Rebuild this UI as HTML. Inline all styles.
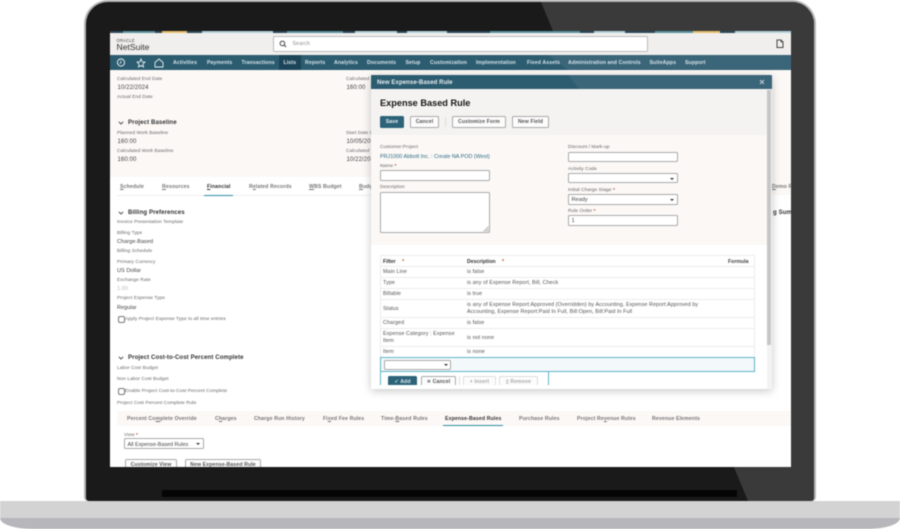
<!DOCTYPE html>
<html><head><meta charset="utf-8">
<style>
*{box-sizing:border-box}
html,body{margin:0;padding:0;background:#fff}
html{overflow:hidden}
body{width:900px;height:529px;overflow:hidden;position:relative;font-family:"Liberation Sans",sans-serif;color:#333;filter:blur(.4px)}
.a,.t,.l,.v,.h,.n,.tb,.b,.box{position:absolute;white-space:nowrap}
.l{font-size:4.8px;color:#666;line-height:6px;letter-spacing:.07px;margin-top:1px}
.v{font-size:5.6px;color:#444;line-height:8px;margin-top:1px}
.v.num{font-size:6px;letter-spacing:.1px}
.h{font-size:6.05px;font-weight:bold;color:#333;line-height:8px;letter-spacing:.1px;margin-top:1px}
.n{font-size:5.2px;font-weight:bold;color:#d5e2e8;line-height:8px;top:59px;letter-spacing:.1px}
.tb{font-size:5.2px;font-weight:bold;color:#777;line-height:8px;letter-spacing:.12px;margin-top:1px}
.b{font-size:5.2px;font-weight:bold;color:#555;background:#fcfcfc;border:1px solid #aaa;border-radius:1.5px;text-align:center;line-height:11px;height:12px;letter-spacing:.1px}
.box{background:#fff;border:1px solid #aaa;border-radius:1.5px}
.arr{position:absolute;width:0;height:0;border-left:2px solid transparent;border-right:2px solid transparent;border-top:2px solid #333}
.rq{color:#c74634;font-weight:bold}
.row{position:absolute;left:380px;width:375px;border-top:1px solid #ececec}
.d{font-size:5.4px;color:#555;line-height:7.2px;letter-spacing:.07px;margin-top:.5px}
</style></head><body>

<!-- base -->
<div class="a" style="left:0;top:501px;width:900px;height:28px;background:#d3d3d3;overflow:hidden;border-radius:0 0 32px 32px / 0 0 11px 11px">
  <div class="a" style="left:0;top:17px;width:900px;height:11px;background:#b7b6bb;border-radius:0 0 32px 32px / 0 0 11px 11px"></div>
</div>

<!-- laptop lid -->
<div class="a" style="left:84px;top:0;width:732px;height:501px;background:#b5b5b5;border-radius:24px 24px 4px 4px;padding:2px 2px 0 2px">
  <div style="position:relative;width:100%;height:100%;background:#1a1a1a;border-radius:22px 22px 3px 3px;overflow:hidden">
    <svg class="a" style="left:0;top:0" width="728" height="499"><polygon points="455,0 728,0 728,499 662,499" fill="#3a3a3a"/></svg>
    <div class="a" style="left:76px;top:488px;width:575px;height:7px;background:#050505"></div>
  </div>
</div>

<!-- screen -->
<div class="a" style="left:110px;top:31px;width:681px;height:436px;background:#fff;overflow:hidden">
  <!-- top stripe -->
  <svg class="a" style="left:0;top:0" width="681" height="2"><rect width="681" height="2" fill="#2a4a58"/><rect x="13" width="32" height="2" fill="#5b93a3"/><rect x="52" width="25" height="2" fill="#e6bf6e"/><rect x="92" width="71" height="2" fill="#b2d2da"/><rect x="177" width="56" height="2" fill="#5b93a3"/><rect x="245" width="42" height="2" fill="#b2d2da"/><rect x="297" width="40" height="2" fill="#b2d2da"/><rect x="380" width="90" height="2" fill="#5b93a3"/><rect x="484" width="31" height="2" fill="#b2d2da"/><rect x="545" width="38" height="2" fill="#5b93a3"/><rect x="583" width="27" height="2" fill="#e6bf6e"/><rect x="625" width="56" height="2" fill="#b2d2da"/></svg>
  <!-- header -->
  <div class="a" style="left:0;top:2px;width:681px;height:22px;background:#f1efed"></div>
  <!-- nav -->
  <svg class="a" style="left:0;top:24px" width="681" height="15"><rect width="681" height="15" fill="#3b6579"/><polygon points="0,0 438,0 458,15 0,15" fill="#2c5c70"/><rect x="169" width="22" height="15" fill="#1c4458"/></svg>
  <!-- content bg -->
  <div class="a" style="left:0;top:39px;width:681px;height:107px;background:#fbf8f6"></div>
</div>

<!-- screen overlay elements, absolute coords -->
<div class="a" style="left:116.5px;top:37.5px;font-size:4.2px;color:#444;line-height:5px;letter-spacing:.2px">ORACLE</div>
<div class="a" style="left:116.5px;top:41.5px;font-size:8.6px;color:#333;line-height:10px">NetSuite</div>
<div class="box" style="left:273px;top:36px;width:375px;height:16px;border-color:#bbb"></div>
<svg class="a" style="left:279px;top:40px" width="8" height="8" viewBox="0 0 8 8"><circle cx="3.4" cy="3.4" r="2.3" fill="none" stroke="#444" stroke-width="1"/><path d="M5 5L7 7" stroke="#444" stroke-width="1.1"/></svg>
<div class="a" style="left:292.5px;top:40px;font-size:5.2px;color:#888;line-height:8px;letter-spacing:.2px">Search</div>
<svg class="a" style="left:776px;top:39px" width="8" height="10" viewBox="0 0 8 10"><path d="M1 1H5L7 3V8.500H1Z" fill="none" stroke="#444" stroke-width="1"/><path d="M5 1V3H7" fill="none" stroke="#444" stroke-width=".8"/></svg>

<!-- nav icons -->
<svg class="a" style="left:116px;top:57px" width="10" height="11" viewBox="0 0 10 11"><circle cx="5" cy="5.500" r="3.600" fill="none" stroke="#e6eef1" stroke-width="1"/><path d="M5 3.500V5.700L3.500 6.700" fill="none" stroke="#e6eef1" stroke-width=".8"/></svg>
<svg class="a" style="left:136px;top:58px" width="10" height="10" viewBox="0 0 10 10"><path d="M5 1L6.200 3.800L9 4.100L6.900 6L7.500 9L5 7.500L2.500 9L3.100 6L1 4.100L3.800 3.800Z" fill="none" stroke="#e6eef1" stroke-width=".9"/></svg>
<svg class="a" style="left:154px;top:58px" width="10" height="10" viewBox="0 0 10 10"><path d="M1 4.500L5 1L9 4.500V9H1Z" fill="none" stroke="#e6eef1" stroke-width=".9"/></svg>
<span class="n" style="left:173px">Activities</span>
<span class="n" style="left:207px">Payments</span>
<span class="n" style="left:241.500px">Transactions</span>
<span class="n" style="left:283.500px">Lists</span>
<span class="n" style="left:305px">Reports</span>
<span class="n" style="left:334px">Analytics</span>
<span class="n" style="left:367px">Documents</span>
<span class="n" style="left:405.500px">Setup</span>
<span class="n" style="left:430px">Customization</span>
<span class="n" style="left:476px">Implementation</span>
<span class="n" style="left:527px">Fixed Assets</span>
<span class="n" style="left:568px">Administration and Controls</span>
<span class="n" style="left:649.500px">SuiteApps</span>
<span class="n" style="left:685px">Support</span>

<!-- main content upper -->
<span class="l" style="left:117px;top:76px">Calculated End Date</span>
<span class="v num" style="left:117.500px;top:82.500px">10/22/2024</span>
<span class="l" style="left:117px;top:94px">Actual End Date</span>
<svg class="a" style="left:118px;top:121px" width="6" height="4"><path d="M.8 .8L3 3L5.200 .8" fill="none" stroke="#444" stroke-width=".9"/></svg>
<span class="h" style="left:128px;top:118px">Project Baseline</span>
<span class="l" style="left:117px;top:130px">Planned Work Baseline</span>
<span class="v num" style="left:117.500px;top:136.500px">160:00</span>
<span class="l" style="left:117px;top:148px">Calculated Work Baseline</span>
<span class="v num" style="left:117.500px;top:155px">160:00</span>
<span class="l" style="left:346px;top:76px">Calculated</span>
<span class="v num" style="left:346.500px;top:82.500px">160:00</span>
<span class="l" style="left:346px;top:130px">Start Date I</span>
<span class="v num" style="left:346.500px;top:136.500px">10/05/20</span>
<span class="l" style="left:346px;top:148px">Calculated</span>
<span class="v num" style="left:346.500px;top:155px">10/22/20</span>

<!-- tabs -->
<div class="a" style="left:117px;top:195px;width:254px;height:1px;background:#eee"></div>
<span class="tb" style="left:120px;top:182px"><u>S</u>chedule</span>
<span class="tb" style="left:162px;top:182px"><u>R</u>esources</span>
<span class="tb" style="left:207px;top:182px;color:#333"><u>F</u>inancial</span>
<div class="a" style="left:204px;top:194.500px;width:29px;height:1.500px;background:#2f8da3"></div>
<span class="tb" style="left:249px;top:182px">R<u>e</u>lated Records</span>
<span class="tb" style="left:309px;top:182px"><u>W</u>BS Budget</span>
<span class="tb" style="left:359px;top:182px"><u>B</u>udg</span>
<div class="a" style="left:772px;top:177px;width:19px;height:18px;background:#fbf8f6"></div>
<span class="tb" style="left:772px;top:182px;width:19px;overflow:hidden"><u>D</u>emo R</span>
<span class="h" style="left:773px;top:208px;width:18px;overflow:hidden">g Sum</span>

<!-- billing -->
<svg class="a" style="left:118px;top:211px" width="6" height="4"><path d="M.8 .8L3 3L5.200 .8" fill="none" stroke="#444" stroke-width=".9"/></svg>
<span class="h" style="left:128px;top:208px">Billing Preferences</span>
<span class="l" style="left:117px;top:219px">Invoice Presentation Template</span>
<span class="l" style="left:117px;top:230px">Billing Type</span>
<span class="v" style="left:117px;top:237px">Charge-Based</span>
<span class="l" style="left:117px;top:248px">Billing Schedule</span>
<span class="l" style="left:117px;top:259px">Primary Currency</span>
<span class="v" style="left:117px;top:266px">US Dollar</span>
<span class="l" style="left:117px;top:277px">Exchange Rate</span>
<span class="v" style="left:117px;top:284px;color:#bbb">1.00</span>
<span class="l" style="left:117px;top:295px">Project Expense Type</span>
<span class="v" style="left:117px;top:302.500px">Regular</span>
<div class="box" style="left:118px;top:316px;width:7px;height:7px;border-color:#777;border-radius:2px"></div>
<span class="l" style="left:125px;top:316px">Apply Project Expense Type to all time entries</span>

<svg class="a" style="left:118px;top:356px" width="6" height="4"><path d="M.8 .8L3 3L5.200 .8" fill="none" stroke="#444" stroke-width=".9"/></svg>
<span class="h" style="left:128px;top:353px">Project Cost-to-Cost Percent Complete</span>
<span class="l" style="left:117px;top:365px">Labor Cost Budget</span>
<span class="l" style="left:117px;top:376px">Non Labor Cost Budget</span>
<div class="box" style="left:118px;top:388px;width:7px;height:7px;border-color:#777;border-radius:2px"></div>
<span class="l" style="left:125px;top:388px">Enable Project Cost-to-Cost Percent Complete</span>
<span class="l" style="left:117px;top:400px">Project Cost Percent Complete Rule</span>

<!-- subtabs -->
<div class="a" style="left:117px;top:411px;width:674px;height:15px;background:#fbf8f6"></div>
<span class="tb" style="left:127px;top:414px">Percent Co<u>m</u>plete Override</span>
<span class="tb" style="left:215px;top:414px">C<u>h</u>arges</span>
<span class="tb" style="left:254px;top:414px">Charge Run History</span>
<span class="tb" style="left:323px;top:414px">Fi<u>x</u>ed Fee Rules</span>
<span class="tb" style="left:381px;top:414px">Time-<u>B</u>ased Rules</span>
<span class="tb" style="left:445px;top:414px;color:#333">Expense-Based Rules</span>
<div class="a" style="left:443px;top:424.500px;width:60px;height:1.500px;background:#2f8da3"></div>
<span class="tb" style="left:519px;top:414px">Purchase Rules</span>
<span class="tb" style="left:577px;top:414px">Project Re<u>v</u>enue Rules</span>
<span class="tb" style="left:652px;top:414px">Revenue Elements</span>

<span class="l" style="left:124px;top:432px">View <span class="rq">*</span></span>
<div class="box" style="left:124px;top:438px;width:80px;height:11px"></div>
<span class="v" style="left:127.500px;top:439.500px;font-size:5.400px">All Expense-Based Rules</span>
<div class="arr" style="left:196px;top:442.500px"></div>

<div class="a" style="left:110px;top:457px;width:681px;height:10px;overflow:hidden">
  <div class="b" style="left:15px;top:2px;width:52px;height:13px;border-radius:2px">Customize View</div>
  <div class="b" style="left:75px;top:2px;width:76px;height:13px;border-radius:2px">New Expense-Based Rule</div>
</div>

<!-- modal -->
<div class="a" style="left:371px;top:75px;width:401px;height:314px;background:#fff;box-shadow:0 2px 9px rgba(0,0,0,.22);border-radius:1px;overflow:hidden">
  <svg class="a" style="left:0;top:0" width="401" height="14"><rect width="401" height="14" fill="#3b6579"/><polygon points="0,0 197,0 208,14 0,14" fill="#2c5c70"/></svg>
  <div class="a" style="left:0;top:14px;width:396px;height:46px;background:#f4f3f1"></div>
  <div class="a" style="left:0;top:60px;width:396px;height:110px;background:#fbf8f6"></div>
  <div class="a" style="left:396px;top:14px;width:5px;height:300px;background:#f3f3f3"></div>
  <div class="a" style="left:396px;top:15px;width:4px;height:255px;background:#c6c6c6"></div>
</div>
<span class="a" style="left:377px;top:79px;font-size:6px;font-weight:bold;color:#e8eff2;line-height:8px;letter-spacing:.1px">New Expense-Based Rule</span>
<svg class="a" style="left:759px;top:79px" width="6" height="6"><path d="M1 1L5 5M5 1L1 5" stroke="#c8d6dc" stroke-width=".9"/></svg>
<span class="a" style="left:380px;top:96.500px;font-size:9.200px;font-weight:bold;color:#161513;line-height:12px">Expense Based Rule</span>

<div class="b" style="left:380px;top:116px;width:24px;background:#2c6379;border-color:#2c6379;color:#e8eff2">Save</div>
<div class="b" style="left:410px;top:116px;width:29px">Cancel</div>
<div class="a" style="left:445px;top:117px;width:1px;height:10px;background:#ddd"></div>
<div class="b" style="left:452px;top:116px;width:54px">Customize Form</div>
<div class="b" style="left:512px;top:116px;width:37px">New Field</div>

<span class="l" style="left:380px;top:144px">Customer:Project</span>
<span class="a" style="left:380px;top:152.500px;font-size:5.400px;color:#2c6a82;line-height:8px;letter-spacing:.02px">PRJ1000 Abbott Inc. : Create NA POD (West)</span>
<span class="l" style="left:380px;top:163px">Name <span class="rq">*</span></span>
<div class="box" style="left:380px;top:170px;width:110px;height:11px"></div>
<span class="l" style="left:380px;top:184px">Description</span>
<div class="box" style="left:380px;top:192px;width:110px;height:41px"></div>
<svg class="a" style="left:483px;top:226px" width="6" height="6"><path d="M5.500 .5L.5 5.500M5.500 2.500L2.500 5.500M5.500 4.500L4.500 5.500" stroke="#999" stroke-width=".6"/></svg>

<span class="l" style="left:568px;top:144px">Discount / Mark-up</span>
<div class="box" style="left:568px;top:152px;width:110px;height:10px"></div>
<span class="l" style="left:568px;top:166px">Activity Code</span>
<div class="box" style="left:568px;top:173px;width:110px;height:10px"></div>
<div class="arr" style="left:670px;top:177.500px"></div>
<span class="l" style="left:568px;top:187px">Initial Charge Stage <span class="rq">*</span></span>
<div class="box" style="left:568px;top:194px;width:110px;height:10.500px"></div>
<span class="v" style="left:571.500px;top:195px">Ready</span>
<div class="arr" style="left:670px;top:198.500px"></div>
<span class="l" style="left:568px;top:208px">Rule Order <span class="rq">*</span></span>
<div class="box" style="left:568px;top:215px;width:110px;height:10.500px"></div>
<span class="v" style="left:571.500px;top:216px">1</span>

<!-- table -->
<div class="a" style="left:380px;top:255px;width:375px;height:112px;border:1px solid #ececec;border-bottom:0"></div>
<div class="row" style="top:266px"></div>
<div class="row" style="top:277px"></div>
<div class="row" style="top:288px"></div>
<div class="row" style="top:299px"></div>
<div class="row" style="top:317px"></div>
<div class="row" style="top:328px"></div>
<div class="row" style="top:346px"></div>
<span class="a" style="left:383px;top:257.500px;font-size:5.200px;font-weight:bold;color:#333;line-height:8px">Filter <span class="rq" style="margin-left:5px">*</span></span>
<span class="a" style="left:467px;top:257.500px;font-size:5.200px;font-weight:bold;color:#333;line-height:8px">Description <span class="rq" style="margin-left:5px">*</span></span>
<span class="a" style="left:728px;top:257.500px;font-size:5.200px;font-weight:bold;color:#444;line-height:8px">Formula</span>
<span class="a d" style="left:383px;top:268.500px">Main Line</span><span class="a d" style="left:467px;top:268.500px">is false</span>
<span class="a d" style="left:383px;top:279.500px">Type</span><span class="a d" style="left:467px;top:279.500px">is any of Expense Report, Bill, Check</span>
<span class="a d" style="left:383px;top:290.500px">Billable</span><span class="a d" style="left:467px;top:290.500px">is true</span>
<span class="a d" style="left:383px;top:305px">Status</span>
<span class="a d" style="left:467px;top:301px">is any of Expense Report:Approved (Overridden) by Accounting, Expense Report:Approved by<br>Accounting, Expense Report:Paid In Full, Bill:Open, Bill:Paid In Full</span>
<span class="a d" style="left:383px;top:319.500px">Charged</span><span class="a d" style="left:467px;top:319.500px">is false</span>
<span class="a d" style="left:383px;top:330.500px">Expense Category : Expense<br>Item</span><span class="a d" style="left:467px;top:334px">is not none</span>
<span class="a d" style="left:383px;top:348.500px">Item</span><span class="a d" style="left:467px;top:348.500px">is none</span>

<div class="a" style="left:380px;top:357px;width:375px;height:14.500px;background:#f3f9fb;border:1px solid #5cb3c6"></div>
<div class="box" style="left:384px;top:360px;width:67px;height:9.500px"></div>
<div class="arr" style="left:444px;top:364px"></div>
<div class="a" style="left:380px;top:371px;width:1px;height:14px;background:#5cb3c6"></div>
<div class="a" style="left:548px;top:371px;width:1px;height:14px;background:#5cb3c6"></div>
<div class="a" style="left:380px;top:371px;width:300px;height:14px;overflow:hidden">
  <div class="b" style="left:8px;top:5px;width:29px;height:13px;background:#2c6379;border-color:#2c6379;color:#d8e5ea">✓ Add</div>
  <div class="b" style="left:41px;top:5px;width:35px;height:13px">✕ Cancel</div>
  <div class="a" style="left:79px;top:5px;width:1px;height:10px;background:#ddd"></div>
  <div class="b" style="left:83px;top:5px;width:33px;height:13px;color:#aaa;border-color:#ddd">+ Insert</div>
  <div class="b" style="left:119px;top:5px;width:39px;height:13px;color:#aaa;border-color:#ddd">▯ Remove</div>
</div>

</body></html>
